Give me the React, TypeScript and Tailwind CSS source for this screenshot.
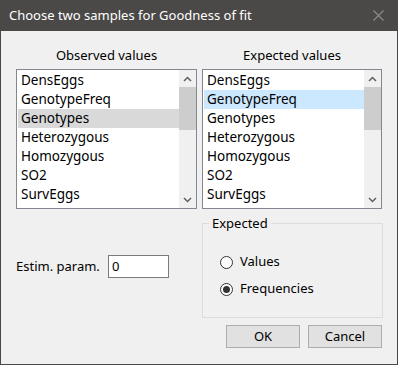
import React from "react";

const items = ["DensEggs", "GenotypeFreq", "Genotypes", "Heterozygous", "Homozygous", "SO2", "SurvEggs"];

const Chevron = ({ up }: { up?: boolean }) => (
    <svg width="9" height="6" viewBox="0 0 9 6" className={up ? "" : "rotate-180"}>
        <path d="M1 5 L4.5 1.5 L8 5" stroke="#606060" strokeWidth="1.5" fill="none" />
    </svg>
);

const ListBox = ({ selected, selClass }: { selected: number; selClass: string }) => (
    <div className="flex h-[140px] border border-[#828790] bg-white">
        <div className="flex-1 pt-[1px] pl-[1px]">
            {items.map((it, i) => (
                <div
                    key={it}
                    className={`h-[19px] pl-[3px] leading-[19px] text-[13.5px] ${i === selected ? selClass : ""}`}
                >
                    {it}
                </div>
            ))}
        </div>
        <div className="flex w-[17px] flex-col bg-[#f0f0f0]">
            <div className="flex h-[17px] items-center justify-center">
                <Chevron up />
            </div>
            <div className="flex-1">
                <div className="h-[43px] bg-[#cdcdcd]" />
            </div>
            <div className="flex h-[17px] items-center justify-center">
                <Chevron />
            </div>
        </div>
    </div>
);

const Radio = ({ checked, label }: { checked?: boolean; label: string }) => (
    <div className="flex h-[20px] items-center gap-[7px]">
        <div className="flex h-[13px] w-[13px] items-center justify-center rounded-full border border-[#333] bg-white">
            {checked && <div className="h-[7px] w-[7px] rounded-full bg-[#333]" />}
        </div>
        <span className="text-[13px]">{label}</span>
    </div>
);

const App = () => {
    return (
        <div
            className="flex h-[365px] w-[398px] flex-col border border-t-0 border-[#4b4947] bg-[#f0f0f0] text-black"
            style={{ fontFamily: "'Noto Sans', 'Open Sans', sans-serif" }}
        >
            <div className="flex h-[31px] items-center justify-between bg-[#4b4947] pl-[8px] pr-[13px] text-[13px] text-white">
                <span>Choose two samples for Goodness of fit</span>
                <svg width="11" height="11" viewBox="0 0 11 11">
                    <path d="M0.5 0.5 L10.5 10.5 M10.5 0.5 L0.5 10.5" stroke="#8a8a8a" strokeWidth="1.2" />
                </svg>
            </div>

            <div className="grid grid-cols-[181px_180px] gap-x-[5px] pl-[15px] pt-[15px]">
                <div className="flex flex-col">
                    <div className="mb-[5px] h-[18px] text-center text-[13px] leading-[18px]">Observed values</div>
                    <ListBox selected={2} selClass="bg-[#d9d9d9]" />
                    <div className="mt-[46px] flex items-center">
                        <span className="w-[92px] text-[13px]">Estim. param.</span>
                        <div className="flex h-[23px] w-[61px] items-center border border-[#7a7a7a] bg-white pl-[3px] text-[13px]">
                            0
                        </div>
                    </div>
                </div>

                <div className="flex flex-col">
                    <div className="mb-[5px] h-[18px] text-center text-[13px] leading-[18px]">Expected values</div>
                    <ListBox selected={1} selClass="bg-[#cce8ff]" />
                    <div className="relative mt-[14px] h-[95px] w-[181px] border border-[#dcdcdc] pl-[17px] pt-[28px]">
                        <span className="absolute -top-[10px] left-[6px] bg-[#f0f0f0] px-[3px] text-[13px] leading-[18px]">
                            Expected
                        </span>
                        <div className="flex flex-col gap-[7px]">
                            <Radio label="Values" />
                            <Radio label="Frequencies" checked />
                        </div>
                    </div>
                    <div className="mt-[7px] flex justify-end gap-[8px]">
                        <button className="h-[23px] w-[74px] border border-[#adadad] bg-[#e1e1e1] text-[13px]">OK</button>
                        <button className="h-[23px] w-[74px] border border-[#adadad] bg-[#e1e1e1] text-[13px]">Cancel</button>
                    </div>
                </div>
            </div>
        </div>
    );
};

export default App;
